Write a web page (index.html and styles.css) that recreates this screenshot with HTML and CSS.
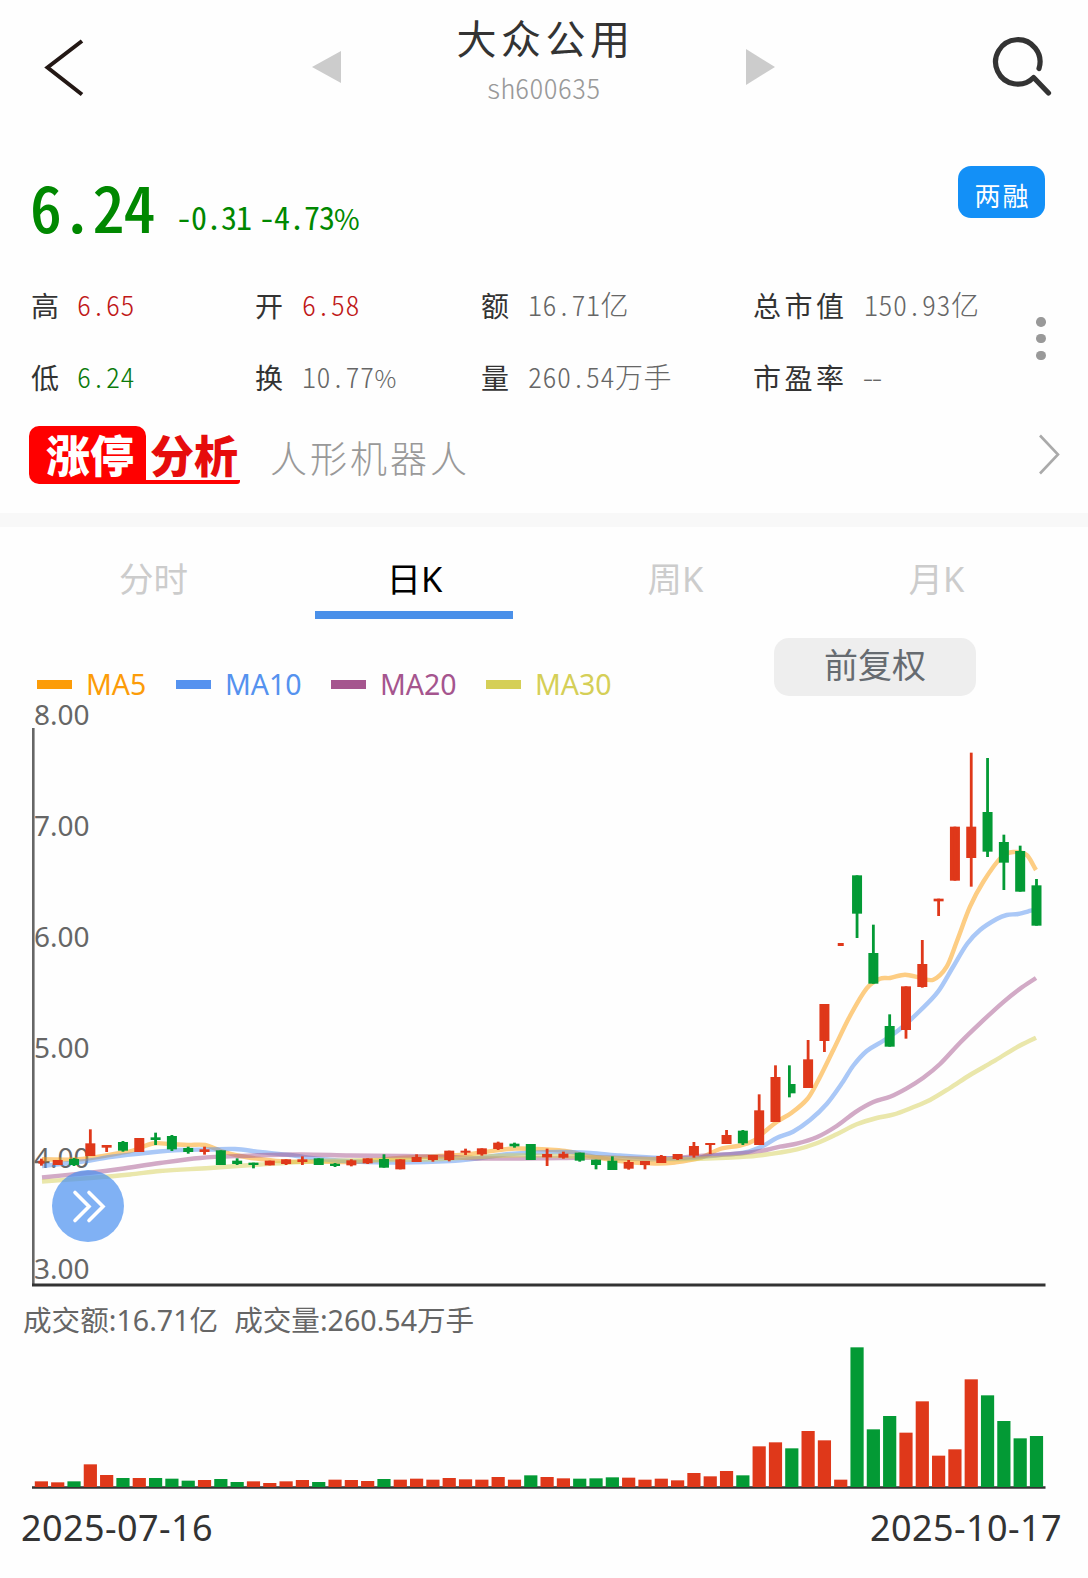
FILE: index.html
```html
<!DOCTYPE html>
<html lang="zh-CN">
<head>
<meta charset="utf-8">
<title>大众公用 sh600635</title>
<link rel="stylesheet" href="styles.css">
</head>
<body>
<header class="topbar kai">
  <svg class="back" width="50" height="64" viewBox="0 0 50 64"><path d="M42 6L7.500 32.500L42 59.500" fill="none" stroke="#231815" stroke-width="4"/></svg>
  <svg class="prev" width="29" height="32" viewBox="0 0 29 32"><path d="M29 0V32L0 16Z" fill="#ccc"/></svg>
  <div class="title">
    <h1 class="name">大众公用</h1>
    <div class="code">sh600635</div>
  </div>
  <svg class="next" width="29" height="36" viewBox="0 0 29 36"><path d="M0 0V36L29 18Z" fill="#ccc"/></svg>
  <svg class="search" width="64" height="64" viewBox="0 0 64 64"><path d="M49 34.500A22.200 22.200 0 1 0 43.600 43.500L58.500 59" fill="none" stroke="#333" stroke-width="5.200" stroke-linecap="round" stroke-linejoin="round"/></svg>
</header>

<section class="quote kai">
  <div class="price-row">
    <span class="price">6.24</span>
    <span class="change">-0.31 -4.73<span class="pct">%</span></span>
    <span class="margin-tag">两融</span>
  </div>
  <div class="stats-row">
    <dl class="stats">
      <dt>高</dt><dd class="up">6.65</dd>
      <dt>开</dt><dd class="up">6.58</dd>
      <dt>额</dt><dd>16.71亿</dd>
      <dt>总市值</dt><dd>150.93亿</dd>
      <dt>低</dt><dd class="down">6.24</dd>
      <dt>换</dt><dd>10.77<span class="pct">%</span></dd>
      <dt>量</dt><dd>260.54万手</dd>
      <dt>市盈率</dt><dd class="none">--</dd>
    </dl>
    <div class="more"><i></i><i></i><i></i></div>
  </div>
  <div class="analysis">
    <span class="logo"><b class="logo-a">涨停</b><b class="logo-b">分析</b></span>
    <span class="concept">人形机器人</span>
    <svg class="go" width="22" height="42" viewBox="0 0 22 42"><path d="M2 1.500L20 20.500L2 39.500" fill="none" stroke="#aaa" stroke-width="2.600"/></svg>
  </div>
</section>

<nav class="tabs">
  <span class="tab">分时</span>
  <span class="tab active">日K</span>
  <span class="tab">周K</span>
  <span class="tab">月K</span>
</nav>

<div class="tools">
  <ul class="legend">
    <li class="ma5">MA5</li>
    <li class="ma10">MA10</li>
    <li class="ma20">MA20</li>
    <li class="ma30">MA30</li>
  </ul>
  <span class="adjust">前复权</span>
</div>

<div class="kline">
  <svg id="kline" width="1088" height="610" viewBox="0 690 1088 610"></svg>
  <div class="expand">
    <svg width="72" height="72" viewBox="0 0 72 72"><path d="M23 22.500L37 36.500L23 50.500M37 22.500L51 36.500L37 50.500" fill="none" stroke="#fff" stroke-width="3.600" stroke-linecap="round"/></svg>
  </div>
</div>

<div class="totals"><span>成交额:16.71亿</span><span>成交量:260.54万手</span></div>
<svg id="volume" class="volume" width="1088" height="150" viewBox="0 1340 1088 150"></svg>
<footer class="dates"><span>2025-07-16</span><span>2025-10-17</span></footer>
<script src="chart.js"></script>
</body>
</html>
```
FILE: styles.css
```css
* { box-sizing: border-box; }
body {
  margin: 0;
  width: 1088px;
  height: 1578px;
  overflow: hidden;
  background: #fefefe;
  color: #333;
  font-family: "Noto Sans", "Noto Sans CJK SC", sans-serif;
}
.kai {
  font-family: "Noto Sans CJK SC", sans-serif;
  font-weight: 300;
  font-feature-settings: "hwid" 1;
}
svg { display: block; }

.topbar {
  display: grid;
  grid-template-columns: 312px 29px 405px 29px 1fr;
  height: 128px;
}
.back { margin: 35px 0 0 40px; }
.prev { margin-top: 51px; }
.next { margin-top: 49px; }
.search { margin: 34px 0 0 215px; }
.title { text-align: center; padding-top: 9px; }
.name {
  margin: 0;
  font-size: 40px;
  font-weight: 400;
  line-height: 56px;
  letter-spacing: 4.500px;
  text-indent: 4px;
}
.code { font-size: 28.500px; line-height: 44px; color: #999; }

.quote { height: 399px; border-bottom: 14px solid #f8f8f8; }
.price-row { display: flex; height: 142px; padding: 38px 43px 0 30px; color: #080; }
.price {
  width: 146px;
  font-size: 64px;
  font-weight: 500;
  letter-spacing: -0.8px;
  line-height: 78px;
}
.change {
  font-size: 32px;
  font-weight: 400;
  letter-spacing: -1px;
  word-spacing: -7px;
  line-height: 101px;
}
.pct { font-size: 0.87em; font-feature-settings: normal; }
.margin-tag {
  margin-left: auto;
  width: 87px;
  height: 52px;
  border-radius: 13px;
  background: #1390f7;
  color: #fff;
  font-size: 26px;
  font-weight: 400;
  letter-spacing: 2px;
  text-indent: 2px;
  line-height: 58px;
  text-align: center;
}
.stats-row { display: flex; height: 144px; }
.stats {
  display: grid;
  grid-template-columns: 46px 178px 47px 179px 47px 225px 111px 152px;
  grid-template-rows: 72px 72px;
  margin: 0 0 0 31px;
  line-height: 70px;
  font-size: 28px;
  white-space: nowrap;
}
.stats dt { letter-spacing: 3.500px; font-weight: 400; }
.stats dd { margin: 0; color: #666; letter-spacing: 0.5px; line-height: 68px; }
.stats .up { color: #c01818; }
.stats .down { color: #0b7a0b; }
.stats .none { letter-spacing: -5px; margin-left: -3px; }
.more { display: flex; flex-direction: column; gap: 7.400px; margin-top: 47px; margin-left: 20px; }
.more i { width: 9.500px; height: 9.500px; border-radius: 50%; background: #999; }

.analysis { display: flex; align-items: flex-start; padding: 12px 28px 0 29px; }
.logo { display: flex; width: 211px; height: 58px; font-size: 44px; line-height: 56px; font-weight: 900; }
.logo b { font-weight: 900; }
.logo-a {
  width: 117px;
  padding-left: 17px;
  border-radius: 10px 10px 0 10px;
  background: #f00;
  color: #fff;
}
.logo-b { width: 94px; padding-left: 4px; border-bottom: 4px solid #f00; border-radius: 0 0 3px 0; color: #e60c0c; }
.concept { margin-left: 30px; font-size: 37px; letter-spacing: 3px; line-height: 63px; color: #999; }
.go { margin: 8px 0 0 auto; }

.tabs { display: flex; height: 92px; padding: 0 22px; }
.tab {
  flex: 1;
  height: 92px;
  padding: 6px 0 0 2px;
  font-size: 34.500px;
  line-height: 92px;
  color: #ccc;
  text-align: center;
}
.active { color: #000; background: linear-gradient(#4a90e9, #4a90e9) center bottom / 198px 8px no-repeat; }

.tools { display: flex; justify-content: space-between; height: 71px; padding: 19px 112px 0 37px; }
.legend { display: flex; margin: 27px 0 0; padding: 0; list-style: none; font-size: 28.500px; line-height: 38px; }
.legend li { display: flex; align-items: center; height: 38px; width: 155px; }
.legend li:first-child { width: 139px; }
.legend li::before { content: ""; width: 35px; height: 9px; margin: 1px 14px 0 0; background: currentColor; }
.ma5 { color: #fc9c08; }
.ma10 { color: #5592ef; }
.ma20 { color: #a5558e; }
.ma30 { color: #d5cf57; }
.adjust {
  width: 202px;
  height: 58px;
  border-radius: 15px;
  background: #eee;
  color: #666b70;
  font-size: 34px;
  line-height: 54px;
  text-align: center;
}

.kline { position: relative; height: 610px; }
.expand {
  position: absolute;
  left: 52px;
  top: 480px;
  width: 72px;
  height: 72px;
  border-radius: 50%;
  background: rgba(74, 144, 239, 0.7);
}
.axis-label { font-size: 28px; fill: #666; }
.totals { display: flex; gap: 16px; height: 40px; padding-left: 23px; font-size: 28.600px; line-height: 40px; color: #666; white-space: nowrap; }
.volume { height: 150px; }
.dates { display: flex; justify-content: space-between; padding: 13px 26px 0 21px; font-size: 36px; line-height: 50px; letter-spacing: 0.4px; }
.rise { fill: #df381a; }
.fall { fill: #039a35; }
```
FILE: chart.js
```js
const NS = 'http://www.w3.org/2000/svg';
const FIRST_X = 41.4;
const STEP = 16.313;

function add(parent, tag, attrs, text) {
  const el = document.createElementNS(NS, tag);
  for (const k in attrs) el.setAttribute(k, attrs[k]);
  if (text) el.textContent = text;
  parent.appendChild(el);
}

// One letter per trading day: R rise, G fall
const days = 'RRGRRGRGGGRGGRRRRGRRRGRRRRRRRRGRRGGGRRRRRRRGRRGRRRGGGRRRRRGGGG';
const candleDays = 'RRGRRGRGGGRGGGRRRGGRRGRRRRRRRGGRRGGGRRRRRRRGRRGRRRGGGRRRRRGGGG';

// body top, body bottom, high, low: thirds of a pixel from y = 1100
const candles = [
  [182,191,176,197],[180,195],[177,195,174,198],[130,168,88,168],[135,143,135,156],
  [126,152,123,155],[114,156],[112,120,98,135],[108,148,105,153],[144,156,140,161],
  [148,156,140,164],[151,195],[182,192,175,195],[188,195,188,205],[182,196],
  [178,192,178,195],[178,186,169,195],[175,195],[191,198,189,201],[181,196,178,199],
  [175,190,175,192],[177,203,163,203],[178,208],[171,186,163,186],[165,180,165,185],
  [152,180,152,184],[152,158,146,165],[145,163,145,167],[128,147,125,150],[131,139,128,143],
  [132,180],[162,172,146,198],[161,173,155,176],[158,182,158,185],[179,195,179,208],
  [182,210,169,210],[186,206,180,209],[183,195,183,208],[168,189,165,189],[162,177,162,180],
  [138,167,126,173],[129,135,129,162],[105,132,90,132],[92,130,90,135],[31,135,-17,135],
  [-69,66,-104,66],[-48,-20,-104,-8],[-122,-36,-180,-36],[-288,-177,-288,-144],[-471,-462],
  [-674,-559,-674,-486],[-441,-349,-526,-349],[-222,-160,-257,-160],[-341,-210,-341,-184],[-408,-339,-480,-337],
  [-604,-596,-604,-552],[-820,-658],[-820,-726,-1042,-640],[-864,-745,-1026,-729],[-774,-712,-796,-630],
  [-747,-625,-763,-625],[-644,-523,-663,-523]
];

// bar tops: thirds of a pixel from y = 1290
const volumes = [
  574,577,574,523,555,564,564,564,566,572,570,567,576,574,579,574,570,576,569,570,573,
  567,569,566,569,564,568,569,561,569,556,561,565,566,565,562,563,569,566,571,549,559,
  543,556,469,457,475,423,451,569,172,418,378,428,334,497,478,268,316,393,445,438
];

const averages = {
  '#fc9c08': [42,1159.3,75,1159.5,91,1158,120,1153,133,1150.5,153,1143.5,170,1144,188,1145,205,1145,221,1151,240,1156,260,1159,285,1161.5,320,1161.5,350,1162,368,1161,400,1158,430,1156.5,460,1155,485,1152,515,1148.5,550,1149.7,565,1151,590,1156,620,1161,655,1163.5,675,1162.5,700,1158,720,1149,740,1145.5,753,1141,763,1133,777,1121.7,791.7,1112.7,807.3,1099,816.7,1083.3,833.3,1050,850,1016,866.7,988.3,880,978.7,890,978,905,974.7,920,977.7,933.3,979.7,946.7,966.7,956.7,941.7,970,906.7,983.3,881.7,1001.7,856.7,1013.3,852,1026.7,855,1036,870],
  '#5592ef': [42,1166,70,1163,90,1160.5,110,1157,150,1152.5,180,1150,210,1149.5,235,1149,260,1152,290,1155,320,1159,355,1161.5,400,1162.5,450,1161,480,1158,510,1154,560,1152,590,1153,620,1155.5,660,1158,690,1158,720,1155,745,1152.5,763,1146,776.7,1138,793,1131.7,810,1120,826.7,1104,843,1081.7,853,1066,866.7,1051,883,1041,900,1029,920,1010.7,938,991.7,953,967,967,944,980,930,996.7,919,1006.7,915,1018,914,1030.7,910.7,1036,909],
  '#a5558e': [42,1177.5,90,1172.7,120,1169,160,1163,200,1158,240,1156,300,1154.5,350,1155.5,400,1156,450,1157,480,1158.5,560,1158,600,1157.5,660,1159,700,1156,740,1153.5,763,1150.7,780,1146.7,796.7,1143.7,816.7,1137.3,836.7,1126,855,1112.3,873.3,1102,890,1096.7,906.7,1088.3,923,1078,940,1064,960,1042.7,980,1023.3,1003,1002.3,1020,988.7,1036,978],
  '#d5cf57': [42,1181.5,90,1178,130,1174.5,160,1171,210,1168,260,1164.5,320,1161,380,1160,440,1159,510,1155.5,560,1156,600,1157.5,640,1159,690,1159,740,1157,763,1155,797,1149.3,816.7,1143.3,836.7,1134.3,856.7,1124.3,876.7,1118,893,1114.7,913,1107.3,930,1100,950,1088,970,1075,993,1061.7,1016.7,1047.3,1036,1037.7]
};

// Catmull-Rom spline through flat [x, y, ...] coordinates
function spline(c) {
  const p = [];
  for (let i = 0; i < c.length; i += 2) p.push([c[i], c[i + 1]]);
  let d = `M${p[0]}`;
  for (let i = 0; i < p.length - 1; i++) {
    const a = p[i - 1] || p[i], b = p[i], e = p[i + 1], f = p[i + 2] || e;
    const h = (e[0] - b[0]) / 3;
    const s1 = (e[1] - a[1]) / (e[0] - a[0]);
    const s2 = (f[1] - b[1]) / (f[0] - b[0]);
    d += `C${b[0] + h},${b[1] + s1 * h} ${e[0] - h},${e[1] - s2 * h} ${e}`;
  }
  return d;
}

const k = document.getElementById('kline');
['8.00', '7.00', '6.00', '5.00', '4.00', '3.00'].forEach((t, i) =>
  add(k, 'text', { x: 34, y: 725 + i * 110.85, class: 'axis-label' }, t));
add(k, 'path', { d: 'M33.3 728V1285', stroke: '#666', 'stroke-width': 2.6 });
add(k, 'path', { d: 'M32 1285H1045.500', stroke: '#333', 'stroke-width': 3 });

// average lines go under the candles
for (const color in averages) {
  add(k, 'path', { d: spline(averages[color]), fill: 'none', stroke: color, 'stroke-width': 4.4, opacity: 0.5 });
}

candles.forEach(([top, bottom, high = top, low = bottom], i) => {
  const x = FIRST_X + STEP * i;
  const cls = candleDays[i] === 'R' ? 'rise' : 'fall';
  const w = i === 49 || i === 0 ? 6 : i === 46 ? 7.5 : 10;
  add(k, 'rect', { x: x - w / 2, y: 1100 + top / 3, width: w, height: (bottom - top) / 3, class: cls });
  add(k, 'rect', { x: (i === 46 ? x - 2.4 : x) - 1.4, y: 1100 + high / 3, width: 2.8, height: (low - high) / 3, class: cls });
});

const v = document.getElementById('volume');
add(v, 'path', { d: 'M32 1487.500H1045.500', stroke: '#333', 'stroke-width': 2.6 });
volumes.forEach((t, i) => {
  const y = 1290 + t / 3;
  add(v, 'rect', { x: FIRST_X + STEP * i - 6.6, y, width: 13.2, height: 1487 - y, class: days[i] === 'R' ? 'rise' : 'fall' });
});
```
